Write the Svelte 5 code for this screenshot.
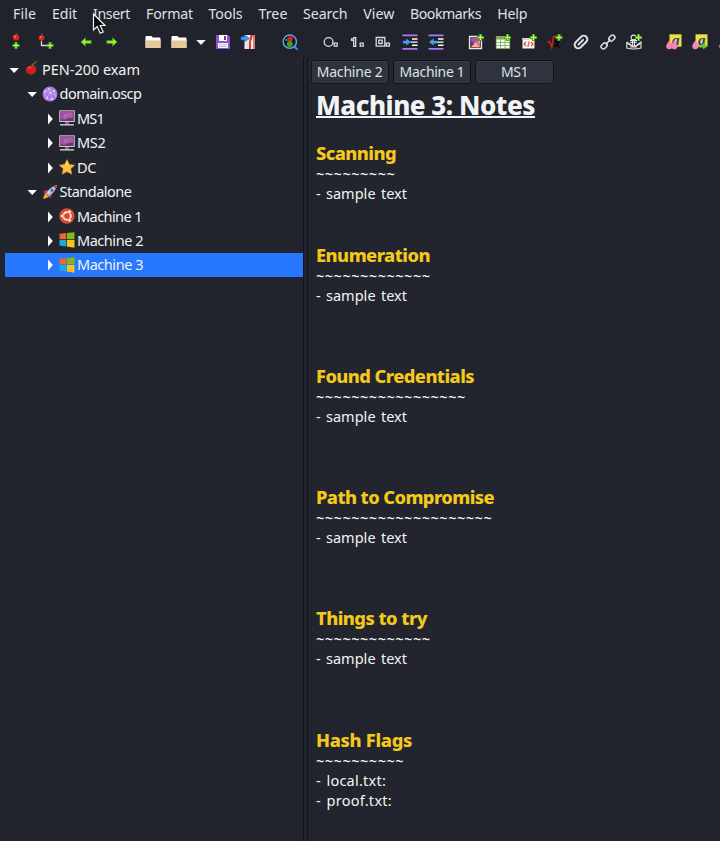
<script>
  const menus = [
    ['File', 23, 13], ['Edit', 25, 52], ['Insert', 37, 93], ['Format', 47, 146], ['Tools', 34, 208.5],
    ['Tree', 29, 258.5], ['Search', 44.5, 303], ['View', 31, 363.3], ['Bookmarks', 71, 410], ['Help', 30, 497.3]
  ].map(([label, width, x], i, all) => ({
    label, width, gap: i ? x - all[i - 1][2] - all[i - 1][1] : x
  }));

  const groups = [
    ['addnode', 'addsub'],
    ['back', 'forward'],
    ['folder', 'folder', 'caret', 'save', 'export'],
    ['find'],
    ['bullet', 'number', 'todo', 'indent', 'unindent'],
    ['image', 'table', 'code', 'formula', 'clip', 'link', 'anchor'],
    ['color', 'color2', 'color3']
  ];

  const tree = [
    { label: 'PEN-200 exam', depth: 0, icon: 'cherry', open: true, width: 98 },
    { label: 'domain.oscp', depth: 1, icon: 'globe', open: true, width: 82 },
    { label: 'MS1', depth: 2, icon: 'monitor', width: 27 },
    { label: 'MS2', depth: 2, icon: 'monitor', width: 28.5 },
    { label: 'DC', depth: 2, icon: 'star', width: 19 },
    { label: 'Standalone', depth: 1, icon: 'rocket', open: true, width: 72 },
    { label: 'Machine 1', depth: 2, icon: 'ubuntu', width: 65 },
    { label: 'Machine 2', depth: 2, icon: 'windows', width: 66 },
    { label: 'Machine 3', depth: 2, icon: 'windows', width: 66, selected: true }
  ];

  const tabs = [['Machine 2', 66], ['Machine 1', 65], ['MS1', 27]];

  const sample = [['- sample text', 91]];
  const sections = [
    { title: 'Scanning', width: 80, tildes: 9, lines: sample, short: true },
    { title: 'Enumeration', width: 114, tildes: 13, lines: sample },
    { title: 'Found Credentials', width: 158, tildes: 17, lines: sample },
    { title: 'Path to Compromise', width: 178, tildes: 20, lines: sample },
    { title: 'Things to try', width: 111, tildes: 13, lines: sample },
    { title: 'Hash Flags', width: 96, tildes: 10, lines: [['- local.txt:', 70], ['- proof.txt:', 76]] }
  ];

  // Spreads the letters of a label over the given width.
  function fit(node, width) {
    const natural = node.getBoundingClientRect().width;
    node.style.letterSpacing = `${(width - natural) / node.textContent.length}px`;
  }
</script>

{#snippet plus(x, y)}
  <path d="M{x + 2} {y}h3v2h2v3h-2v2h-3v-2h-2v-3h2z" fill="#4cab1c" />
  <path d="M{x + 3} {y + 1}h1v2h2v1h-2v2h-1v-2h-2v-1h2z" fill="#c4f574" />
{/snippet}

{#snippet tool(name)}
  {#if name === 'addnode'}
    <path d="M8 3V1l1-2" stroke="#6a4a22" fill="none" /><circle cx="8" cy="3.4" r="3.1" fill="#dc2418" /><circle cx="7" cy="2.6" r=".9" fill="#ff9b80" />
    {@render plus(4.5, 8)}
  {:else if name === 'addsub'}
    <path d="M3.5 3V1l1-2" stroke="#6a4a22" fill="none" /><circle cx="3.5" cy="3.8" r="2.9" fill="#dc2418" /><circle cx="2.6" cy="3" r=".8" fill="#ff9b80" />
    <path d="M3.5 7v4.5H9" stroke="#d8d8d8" stroke-width="1.3" fill="none" />{@render plus(8.5, 8)}
  {:else if name === 'back'}
    <path d="M2.8 8l4.7-4.2v2.8h5.7v2.8H7.5v2.8z" fill="#a3ea48" stroke="#3e8e14" stroke-width=".9" />
  {:else if name === 'forward'}
    <path d="M13.2 8L8.5 3.8v2.8H2.8v2.8h5.7v2.8z" fill="#a3ea48" stroke="#3e8e14" stroke-width=".9" />
  {:else if name === 'folder'}
    <path d="M.5 3q0-1 1-1h5l1.3 1.5h6.7q1 0 1 1V14H.5z" fill="#fff" /><path d="M.5 6.5h15V13q0 1-1 1h-13q-1 0-1-1z" fill="#e5c89a" /><path d="M.5 6.5h15" stroke="#f4dfbc" />
  {:else if name === 'caret'}
    <path d="M3.2 6h9.6L8 11z" fill="#f2f3f5" />
  {:else if name === 'save'}
    <path d="M1 1h12l2 2v12H1z" fill="#8c54ca" /><path d="M4 1h8v6H4z" fill="#fff" /><path d="M9 2h2v4H9z" fill="#6a3ba6" /><path d="M3 9h10v5H3z" fill="#f7f4fb" /><path d="M4 10.7h8M4 12.5h8" stroke="#b9a8d0" stroke-width=".8" />
  {:else if name === 'export'}
    <path d="M3.5 1H14v14H3.5z" fill="#f4f4f4" /><path d="M4 8l4-3 1 10H5z" fill="#e3e3e3" /><path d="M9.5 1L8 8v7h2V8l2-7z" fill="#d83a2c" /><path d="M13 1v14" stroke="#e0574a" stroke-width="1.6" /><path d="M0 2.8h4V1l4.5 3.4L4 7.5V6H0z" fill="#369df2" stroke="#1769b8" stroke-width=".5" />
  {:else if name === 'find'}
    <path d="M12 12.2l2.8 2.8" stroke="#3586e6" stroke-width="2.2" stroke-linecap="round" /><circle cx="7.8" cy="7.7" r="6.6" fill="#111a20" stroke="#62a0de" stroke-width="1.5" /><circle cx="8.2" cy="4.9" r="2.6" fill="#d92318" /><circle cx="7.8" cy="10" r="2.9" fill="#4a9d1d" /><circle cx="4.6" cy="6" r=".9" fill="#56cf35" />
  {:else if name === 'bullet'}
    <g fill="none" stroke="#d9dbde" stroke-width="1.3"><circle cx="5.6" cy="8" r="4.4" /><path d="M11.2 9.2h3v3h-3z" /></g>
  {:else if name === 'number'}
    <g fill="none" stroke="#d9dbde" stroke-width="1.3"><path d="M2.5 4.8h2.2V3.6h2v8.8h-2V6.4H2.5zM11.2 9.2h3v3h-3z" /></g>
  {:else if name === 'todo'}
    <g fill="none" stroke="#d9dbde" stroke-width="1.3"><path d="M1.2 3.5h8.6v8.7H1.2zM3.8 6.2h3.4v3.3H3.8zM11.4 9.2h3v3h-3z" /></g>
  {:else if name === 'indent' || name === 'unindent'}
    <path d="M.5 1.3h15M.5 14.9h15" stroke="#ab7cea" stroke-width="1.8" /><path d="M10 5h5.5M8.5 8.1h7M10 11.3h5.5" stroke="#fff" stroke-width="1.4" />
    {#if name === 'indent'}<path d="M1 6.7h3.3V4.4L8.8 8l-4.5 3.6V9.4H1z" fill="#3fa0f7" />{:else}<path d="M8.8 6.7H5.5V4.4L1 8l4.5 3.6V9.4h3.3z" fill="#3fa0f7" />{/if}
  {:else if name === 'image'}
    <path d="M1.5 2.5h12v12h-12z" fill="#4f2650" stroke="#eee8e2" stroke-width="1.3" /><path d="M3 4h9v6H3z" fill="#a9529f" /><path d="M3 13l5-5 4 5z" fill="#f7b17c" /><path d="M9 7h3v6z" fill="#e98c8e" /><path d="M3 7l3 2-3 3z" fill="#6e397d" />{@render plus(9, 0)}
  {:else if name === 'table'}
    <path d="M1 2.5h14v12H1z" fill="#f6f8f3" /><path d="M1 2.5h14v3H1z" fill="#7bb544" /><path d="M1 8.5h14M1 11.5h14M5.5 3v12M10 3v12M1.3 3v11.5M14.7 3v11.5M1 14.5h14" stroke="#76a95c" stroke-width=".8" />{@render plus(9, 0)}
  {:else if name === 'code'}
    <path d="M1.5 4h12v10.5h-12z" fill="#f9f6f3" /><path d="M1.5 4h12v2h-12z" fill="#d9d7d6" /><path d="M5 8l-2 2 2 2m5-4l2 2-2 2M8.3 7.3l-1.5 5.5" fill="none" stroke="#df4f20" stroke-width="1.2" />{@render plus(9, 0)}
  {:else if name === 'formula'}
    <path d="M.5 8.5l2-1 2.3 6L6.5 2.5H15" fill="none" stroke="#df1e17" stroke-width="1.4" /><path d="M7.5 6.5q2 0 2.3 3t2.7 3M13 6.5L7.5 13" stroke="#050505" fill="none" stroke-width="1.8" />{@render plus(8.5, 0)}
  {:else if name === 'clip'}
    <g transform="rotate(-45 8 8)" fill="none" stroke="#dedfe1"><rect x=".5" y="4.4" width="15" height="7.2" rx="3.6" stroke-width="2" /><path d="M4.5 8h6.5" stroke-width="2" stroke-linecap="round" /></g>
  {:else if name === 'link'}
    <g transform="rotate(-45 8 8)" fill="none" stroke="#dedfe1" stroke-width="1.5"><rect x="-.8" y="5.7" width="6.7" height="4.6" rx="2.3" /><rect x="10.1" y="5.7" width="6.7" height="4.6" rx="2.3" /><path d="M4.5 8h7" /></g>
  {:else if name === 'anchor'}
    <g fill="none" stroke="#e7e8e8" stroke-width="1.1"><circle cx="7.5" cy="3.5" r="2.4" /><path d="M6.5 5.8v6M8.5 5.8v6M4 6.5h7M4 8.3h7M.8 8v6q7 2 14.2 0V8l-3 2.2h1.2q-5 3.5-10.4 0H4L.8 8M4 13h7" /></g>{@render plus(9, 0)}
  {:else}
    {#if name !== 'color3'}<path d="M3.5.3h12v12.4h-12z" fill="#f5dc45" /><text x="6" y="10.8" class="glyph">a</text>{/if}
    <path d="M3.4 6.5Q.2 10.4.2 12.3q0 2.9 3.1 2.9t3.1-2.9q0-2-3-5.8z" fill="#f587b8" />
    {#if name === 'color'}
      <path d="M8.4 6.5q-3 3.9-3 5.8 0 2.9 3 2.9t3-2.9q0-2-3-5.8z" fill="#f587b8" stroke="#d9609a" stroke-width=".4" />
    {:else if name === 'color2'}
      <path d="M7 11h4V9l4.5 3.2-4.5 3.2v-2H7z" fill="#6cc92c" />
    {/if}
  {/if}
{/snippet}

{#snippet treeIcon(name)}
  {#if name === 'cherry'}
    <path d="M6.5 5.5q1.5-3 6-5.5" stroke="#4d8c20" stroke-width="1.2" fill="none" /><path d="M6 4.5q5.6-1.6 6 3.4 0 5-5 6-5 0-6-4.4-.4-5 5-5z" fill="#cf2119" /><path d="M3.5 7q2-1 3 0" stroke="#ff806a" fill="none" />
  {:else if name === 'globe'}
    <circle cx="8" cy="8" r="7.5" fill="#a879e4" /><path d="M2 5l5-2 5 2 2 5-4 4-5-2-3-7 7 1 1 8M5 12l3-6 6 4" fill="none" stroke="#d8bdf8" stroke-width=".6" /><g fill="#eee0ff"><circle cx="7" cy="3" r=".9" /><circle cx="12" cy="5" r=".9" /><circle cx="8.5" cy="6.5" r="1" /><circle cx="5" cy="12" r=".9" /><circle cx="10" cy="13" r=".9" /><circle cx="3" cy="6" r=".7" /></g>
  {:else if name === 'monitor'}
    <path d="M.2.3h15.6V12H.2z" fill="#c9c7ca" /><path d="M1.2 1.3h13.6V11H1.2z" fill="#743379" /><path d="M1.2 1.3h13.6L1.2 10z" fill="#a551a3" /><path d="M5 4.5q4-1 9-2v5q-5 0-10 3z" fill="#c078bb" opacity=".65" /><path d="M6 12h4v2H6z" fill="#777" /><path d="M1 14h14v1.6H1z" fill="#bdbdc0" />
  {:else if name === 'star'}
    <path d="M8 .7l2.3 4.8 5.2.7-3.8 3.6.9 5.3L8 12.5l-4.6 2.6.9-5.3L.5 6.2l5.2-.7z" fill="#fcc33a" stroke="#f0a52b" stroke-width=".7" /><path d="M8 2.5l1 4H6z" fill="#ffe28a" />
  {:else if name === 'rocket'}
    <path d="M1 15l2-6 4 4z" fill="#f6b52d" /><path d="M5 6L1 7.5 3.8 10 8 14l2-3z" fill="#d2393a" /><path d="M3.8 9.5Q8 2.5 15 1q-1 7-8.3 11.2z" fill="#aebdcb" /><path d="M11 2.5L15 1l-1.3 4z" fill="#d93a3a" /><path d="M6 9q4-5 6-5" stroke="#eff4f7" fill="none" /><circle cx="10" cy="6.2" r="1.6" fill="#336fb0" />
  {:else if name === 'ubuntu'}
    <circle cx="8" cy="8" r="7.7" fill="#df4a2e" /><circle cx="8" cy="8" r="3.8" fill="none" stroke="#fff" stroke-width="1.7" /><g fill="#fff" stroke="#df4a2e" stroke-width=".7"><circle cx="3.3" cy="8" r="1.7" /><circle cx="10.5" cy="3.8" r="1.7" /><circle cx="10.5" cy="12.2" r="1.7" /></g>
  {:else}
    <path d="M.5 1.8L7 1v6.2H.5z" fill="#f1672b" /><path d="M7.8 1l7.7-.8v7H7.8z" fill="#86b910" /><path d="M.5 8H7v6.4l-6.5-.8z" fill="#1ba9df" /><path d="M7.8 8h7.7v7.7l-7.7-1.1z" fill="#f8c321" />
  {/if}
{/snippet}

<div class="app">
  <nav class="menu">
    {#each menus as m}
      <span class="item" style:margin-left="{m.gap}px" style:width="{m.width}px"><span class="fit" use:fit={m.width}>{m.label}</span></span>
    {/each}
  </nav>

  <div class="toolbar">
    {#each groups as group}
      <div class="group">
        {#each group as name}
          <span class="cell {name}"><svg width="16" height="16" viewBox="0 0 16 16">{@render tool(name)}</svg></span>
        {/each}
      </div>
    {/each}
  </div>

  <div class="body">
    <aside>
      {#each tree as n}
        <div class="row d{n.depth}" class:selected={n.selected}>
          <svg class="arrow" width="10" height="12" viewBox="0 0 10 12"><path d={n.open ? 'M.5 4h9.4L5.2 9z' : 'M3 0.5v11L7.8 6z'} fill="#fff" /></svg>
          <svg class="ico" width="16" height="16" viewBox="0 0 16 16">{@render treeIcon(n.icon)}</svg>
          <span class="fit" use:fit={n.width}>{n.label}</span>
        </div>
      {/each}
    </aside>
    <div class="splitter"></div>
    <main>
      <div class="tabs">
        {#each tabs as [label, width]}
          <button><span class="fit" use:fit={width}>{label}</span></button>
        {/each}
      </div>
      <article>
        <h1><span class="fit" use:fit={219}>Machine 3: Notes</span></h1>
        {#each sections as s}
          <section class:short={s.short}>
            <h2><span class="fit" use:fit={s.width}>{s.title}</span></h2>
            <p class="tildes"><span class="fit" use:fit={s.tildes * 8.81}>{'~'.repeat(s.tildes)}</span></p>
            {#each s.lines as [text, width]}
              <p><span class="fit" use:fit={width}>{text}</span></p>
            {/each}
          </section>
        {/each}
      </article>
    </main>
  </div>

  <svg class="cursor" width="14" height="22" viewBox="0 0 14 22"><path d="M1.5 1v16l3.7-3.4 3 6.7 3-1.3-3-6.5H13z" fill="#08090b" stroke="#f4f4f4" stroke-width="1.2" /></svg>
</div>

<style>
  :global(body) { background: #22252e; }
  .app {
    position: relative; width: 720px; height: 841px; overflow: hidden;
    display: flex; flex-direction: column; box-sizing: border-box;
    background: #22252e; color: #f2f3f4;
    font-family: 'Noto Sans', sans-serif; font-size: 14.5px;
  }
  .fit { display: inline-block; white-space: pre; }
  svg { display: block; overflow: visible; flex: none; }
  .menu { display: flex; height: 28px; line-height: 28px; background: #20232b; color: #dfe1e3; font-size: 14.2px; }
  .item { flex: none; }
  .toolbar { display: flex; height: 28px; gap: 14.2px; padding: 0 0 2px 2px; align-items: center; background: #20232b; }
  .group { display: flex; flex: none; }
  .cell { width: 26.25px; flex: none; display: flex; justify-content: center; }
  .cell.addnode { width: 27px; }
  .cell.addsub { width: 29px; padding-left: 2px; margin-right: -1.5px; }
  .cell.caret { width: 17.8px; }
  .cell.find { width: 27.2px; }
  .glyph { font: italic bold 15px 'Liberation Serif', serif; fill: #173d8c; }
  .body { display: flex; flex: 1; min-height: 0; }
  aside { width: 298px; padding-left: 5px; flex: none; }
  .row { height: 24.44px; display: flex; align-items: center; margin-top: -0.8px; margin-bottom: 0.8px; }
  .row .fit { line-height: 20px; margin-top: -1px; }
  .d0 { padding-left: 4px; }
  .d1 { padding-left: 22px; }
  .d2 { padding-left: 40px; }
  .ico { margin: 0 2px 0 4px; }
  .d0 .ico { width: 15px; margin-left: 6px; }
  .d1 .ico { margin: 0 1.5px 0 5px; }
  .arrow { margin-top: 1px; }
  .selected { background: #2777ff; }
  .splitter { width: 3px; flex: none; border-left: 1px solid #11131a; border-right: 1px solid #11131a; background: #22252e; }
  main { flex: 1; min-width: 0; }
  .tabs { display: flex; gap: 4px; padding: 2px 0 0 2.5px; }
  button {
    width: 78.4px; height: 24px; padding: 0; box-sizing: border-box; flex: none;
    border: 1px solid #13151b; border-radius: 3px; background: #2f333e; color: #dfe1e4;
    font: inherit; font-size: 14px; line-height: 22px; box-shadow: inset 0 1px #393d48;
  }
  article { padding-left: 8px; }
  h1, h2, p { margin: 0; }
  h1 { height: 57px; font-size: 26px; line-height: 42px; font-weight: 800; }
  h1 .fit { line-height: 28px; height: 27px; border-bottom: 2px solid #f2f3f4; box-sizing: border-box; }
  h2 { height: 23px; line-height: 23px; font-size: 18.3px; font-weight: 800; color: #f5c91c; }
  p { height: 20px; line-height: 19px; word-spacing: 1.5px; }
  .tildes { font-weight: 500; }
  section { height: 121.3px; }
  .short { height: 101.6px; }
  .cursor { position: absolute; left: 92px; top: 13px; }
</style>
